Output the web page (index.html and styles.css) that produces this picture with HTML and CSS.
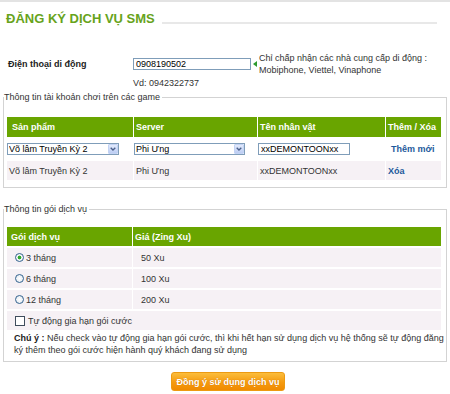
FILE: index.html
```html
<!DOCTYPE html>
<html>
	<head>
		<meta charset="UTF-8">
		<title>Đăng ký dịch vụ SMS</title>
		<link rel="stylesheet" href="styles.css">
	</head>
	<body>
		<div class="topbar"></div>
		<div class="head">
			<h1>ĐĂNG KÝ DỊCH VỤ SMS</h1>
			<div class="head-line"></div>
		</div>
		<div class="phone">
			<div class="phone-label">Điện thoại di động</div>
			<input class="txt phone-input" type="text" value="0908190502">
			<span class="arrow"></span>
			<div class="phone-note">Chỉ chấp nhận các nhà cung cấp di động :<br>Mobiphone, Viettel, Vinaphone</div>
		</div>
		<div class="phone-ex">Vd: 0942322737</div>

		<fieldset class="box box-game">
			<legend>Thông tin tài khoản chơi trên các game</legend>
			<table class="grid grid-game">
				<colgroup><col class="g1"><col class="g2"><col class="g3"><col class="g4"></colgroup>
				<tr class="hd">
					<th class="first">Sản phẩm</th>
					<th>Server</th>
					<th>Tên nhân vật</th>
					<th>Thêm / Xóa</th>
				</tr>
				<tr class="row-edit">
					<td>
						<span class="sel sel-game">
							<select><option>Võ lâm Truyền Kỳ 2</option></select>
							<span class="sel-btn"><svg width="6" height="4" viewBox="0 0 6 4"><path d="M0.7 0.7L3 3L5.3 0.7" fill="none" stroke="#4a5f8a" stroke-width="1.3"/></svg></span>
						</span>
					</td>
					<td>
						<span class="sel sel-server">
							<select><option>Phi Ưng</option></select>
							<span class="sel-btn"><svg width="6" height="4" viewBox="0 0 6 4"><path d="M0.7 0.7L3 3L5.3 0.7" fill="none" stroke="#4a5f8a" stroke-width="1.3"/></svg></span>
						</span>
					</td>
					<td><input class="txt name-input" type="text" value="xxDEMONTOONxx"></td>
					<td class="act act-add"><a href="###">Thêm mới</a></td>
				</tr>
				<tr class="row-alt">
					<td>Võ lâm Truyền Kỳ 2</td>
					<td>Phi Ưng</td>
					<td>xxDEMONTOONxx</td>
					<td class="act"><a href="###">Xóa</a></td>
				</tr>
			</table>
		</fieldset>

		<fieldset class="box box-pack">
			<legend>Thông tin gói dịch vụ</legend>
			<table class="grid grid-pack">
				<colgroup><col class="p1"><col class="p2"></colgroup>
				<tr class="hd">
					<th class="first">Gói dịch vụ</th>
					<th>Giá (Zing Xu)</th>
				</tr>
				<tr>
					<td><label><input class="radio" type="radio" name="pack" checked>3 tháng</label></td>
					<td class="price">50 Xu</td>
				</tr>
				<tr>
					<td><label><input class="radio" type="radio" name="pack">6 tháng</label></td>
					<td class="price">100 Xu</td>
				</tr>
				<tr>
					<td><label><input class="radio" type="radio" name="pack">12 tháng</label></td>
					<td class="price">200 Xu</td>
				</tr>
				<tr>
					<td colspan="2"><label><input class="check" type="checkbox">Tự động gia hạn gói cước</label></td>
				</tr>
			</table>
			<p class="note"><b>Chú ý :</b> Nếu check vào tự động gia hạn gói cước, thì khi hết hạn sử dụng dịch vụ hệ thống sẽ tự động đăng<br>ký thêm theo gói cước hiện hành quý khách đang sử dụng</p>
		</fieldset>

		<div class="actions">
			<button class="btn" type="button">Đồng ý sử dụng dịch vụ</button>
		</div>
	</body>
</html>
```

FILE: styles.css
```css
*{
	margin: 0;
	padding: 0;
}
body{
	width: 450px;
	font-family: "Liberation Sans", Arial, sans-serif;
	font-size: 9px;
	line-height: 12px;
	color: #333;
	background: #fff;
}
a{
	text-decoration: none;
	color: #1d5a9c;
	font-weight: bold;
}
/* tieu de */
.topbar{
	height: 2px;
	background: #e3e3e3;
}
.head{
	display: flex;
	align-items: flex-end;
	padding: 9px 13px 0 6px;
}
.head h1{
	font-size: 13px;
	line-height: 15px;
	color: #67a31b;
	font-weight: bold;
}
.head-line{
	flex: 1;
	height: 2px;
	margin: 0 0 2px 7px;
	background: #e8e8e8;
}
/* so dien thoai */
.phone{
	display: grid;
	grid-template-columns: 125px 118px 8px auto;
	align-items: center;
	margin-top: 26px;
	padding-left: 8px;
}
.phone-label{
	font-weight: bold;
	color: #222;
}
.txt{
	height: 12px;
	border: 1px solid #7f9db9;
	box-sizing: border-box;
	padding: 0 2px;
	font-family: inherit;
	font-size: 9px;
	color: #000;
	outline: none;
}
.phone-input{
	width: 118px;
}
.arrow{
	width: 0;
	height: 0;
	margin-left: 2px;
	border-top: 3px solid transparent;
	border-bottom: 3px solid transparent;
	border-right: 4px solid #2e9a2e;
}
.phone-note{
	color: #333;
}
.phone-ex{
	margin-top: 1px;
	padding-left: 133px;
}
/* khung */
.box{
	margin: 2px 3px 0 3px;
	padding: 0;
	border: 1px solid #d3d3d3;
	min-inline-size: 0;
}
.box legend{
	padding: 0 2px 0 0;
	margin-left: 0;
	line-height: 12px;
	color: #333;
}
.box-pack{
	margin-top: 15px;
}
.grid{
	width: 436px;
	table-layout: fixed;
	border-collapse: separate;
	border-spacing: 1px;
	margin: 13px 4px 6px 2px;
}
.grid th{
	background: #69a500;
	color: #fff;
	font-weight: bold;
	text-align: left;
	padding: 0 0 0 2px;
}
.grid th.first{
	padding-left: 5px;
}
.grid td{
	padding: 0 0 0 2px;
	vertical-align: middle;
	color: #333;
}
.grid-game .hd{
	height: 20px;
}
.grid-game col.g1{
	width: 126px;
}
.grid-game col.g2{
	width: 123px;
}
.grid-game col.g3{
	width: 127px;
}
.row-edit{
	height: 22px;
}
.row-edit td{
	padding: 0;
}
.row-edit td.act-add{
	padding-left: 5px;
}
.row-alt{
	height: 19px;
}
.row-alt td{
	background: #f6f1f5;
}
/* select kieu cu */
.sel{
	display: inline-flex;
	align-items: center;
	height: 12px;
	box-sizing: border-box;
	border: 1px solid #7f9db9;
	background: #fff;
	vertical-align: middle;
}
.sel select{
	flex: 1;
	min-width: 0;
	height: 10px;
	border: none;
	background: transparent;
	appearance: none;
	-webkit-appearance: none;
	font-family: inherit;
	font-size: 9px;
	line-height: 10px;
	color: #000;
	padding: 0 0 0 1px;
	outline: none;
}
.sel-game{
	width: 112px;
}
.sel-server{
	width: 111px;
}
.sel-btn{
	display: flex;
	align-items: center;
	justify-content: center;
	width: 10px;
	height: 10px;
	box-sizing: border-box;
	border: 1px solid #c3d3f4;
	background: linear-gradient(#e2eafc, #bccdf3);
	border-radius: 1px;
}
.name-input{
	width: 92px;
	vertical-align: middle;
	margin-top: -2px;
}
/* goi dich vu */
.grid-pack{
	border-spacing: 1px 2px;
	margin: 10px 4px 0 2px;
}
.grid-pack col.p1{
	width: 125px;
}
.grid-pack .hd{
	height: 19px;
}
.grid-pack th.first{
	padding-left: 4px;
}
.grid-pack tr{
	height: 19px;
}
.grid-pack td{
	background: #f6f1f5;
	padding-left: 8px;
}
.grid-pack td.price{
	padding-left: 8px;
}
.grid-pack label{
	display: flex;
	align-items: center;
}
.radio{
	appearance: none;
	-webkit-appearance: none;
	width: 9px;
	height: 9px;
	box-sizing: border-box;
	border: 1px solid #33638f;
	border-radius: 50%;
	background: radial-gradient(circle, #ffffff 0, #dfe6ee 100%);
	margin: 0 2px 0 0;
}
.radio:checked{
	background: radial-gradient(circle, #2faa2f 0, #2faa2f 1.6px, #f4f6f8 2.2px);
}
.check{
	appearance: none;
	-webkit-appearance: none;
	width: 10px;
	height: 10px;
	box-sizing: border-box;
	border: 1px solid #3f4d5c;
	background: #fff;
	margin: 0 3px 0 0;
}
.note{
	padding: 0 0 5px 10px;
	white-space: nowrap;
	color: #333;
}
.note b{
	color: #222;
}
/* nut */
.actions{
	display: flex;
	justify-content: center;
	padding-left: 6px;
	margin-top: 10px;
}
.btn{
	height: 19px;
	padding: 0 4px;
	border: 1px solid #ec9a12;
	border-radius: 3px;
	background: linear-gradient(#fbbd3c, #f59b10 55%, #f08a00);
	color: #fff;
	font-family: inherit;
	font-size: 9px;
	font-weight: bold;
	text-shadow: 0 0 1px #c76d00;
}
```
